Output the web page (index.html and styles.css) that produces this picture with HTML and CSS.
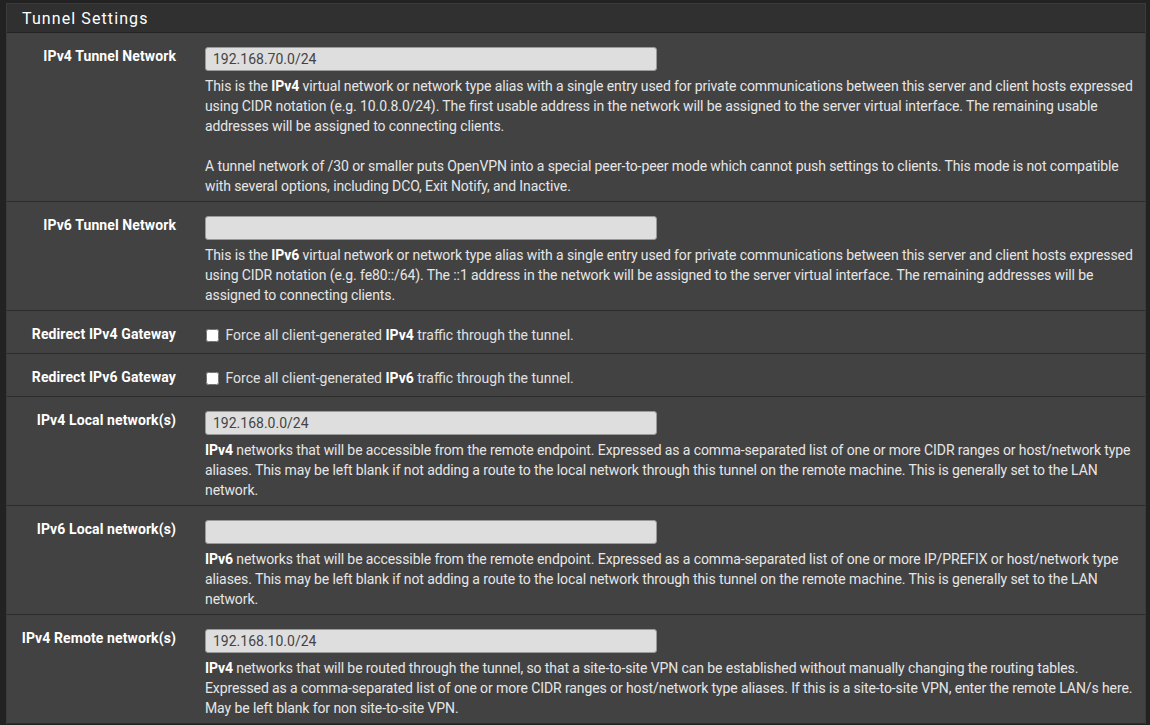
FILE: index.html
```html
<!DOCTYPE html>
<html lang="en">
<head>
    <meta charset="UTF-8">
    <title>Tunnel Settings</title>
    <link rel="stylesheet" href="styles.css">
</head>
<body>
<div class="panel">
    <div class="panel-heading">
        <h2 class="panel-title">Tunnel Settings</h2>
    </div>
    <div class="panel-body">
        <div class="form-group">
            <label class="col-label" for="tunnel_network">IPv4 Tunnel Network</label>
            <div class="col-field">
                <input type="text" id="tunnel_network" value="192.168.70.0/24">
                <span class="help-block">This is the <b>IPv4</b> virtual network or network type alias with a single entry used for private communications between this server and client hosts expressed using CIDR notation (e.g. 10.0.8.0/24). The first usable address in the network will be assigned to the server virtual interface. The remaining usable addresses will be assigned to connecting clients.<br><br>A tunnel network of /30 or smaller puts OpenVPN into a special peer-to-peer mode which cannot push settings to clients. This mode is not compatible with several options, including DCO, Exit Notify, and Inactive.</span>
            </div>
        </div>
        <div class="form-group">
            <label class="col-label" for="tunnel_networkv6">IPv6 Tunnel Network</label>
            <div class="col-field">
                <input type="text" id="tunnel_networkv6" value="">
                <span class="help-block">This is the <b>IPv6</b> virtual network or network type alias with a single entry used for private communications between this server and client hosts expressed using CIDR notation (e.g. fe80::/64). The ::1 address in the network will be assigned to the server virtual interface. The remaining addresses will be assigned to connecting clients.</span>
            </div>
        </div>
        <div class="form-group">
            <label class="col-label" for="gwredir">Redirect IPv4 Gateway</label>
            <div class="col-field">
                <label class="chkbox"><input type="checkbox" id="gwredir"> Force all client-generated <b>IPv4</b> traffic through the tunnel.</label>
            </div>
        </div>
        <div class="form-group">
            <label class="col-label" for="gwredir6">Redirect IPv6 Gateway</label>
            <div class="col-field">
                <label class="chkbox"><input type="checkbox" id="gwredir6"> Force all client-generated <b>IPv6</b> traffic through the tunnel.</label>
            </div>
        </div>
        <div class="form-group">
            <label class="col-label" for="local_network">IPv4 Local network(s)</label>
            <div class="col-field">
                <input type="text" id="local_network" value="192.168.0.0/24">
                <span class="help-block"><b>IPv4</b> networks that will be accessible from the remote endpoint. Expressed as a comma-separated list of one or more CIDR ranges or host/network type aliases. This may be left blank if not adding a route to the local network through this tunnel on the remote machine. This is generally set to the LAN network.</span>
            </div>
        </div>
        <div class="form-group">
            <label class="col-label" for="local_networkv6">IPv6 Local network(s)</label>
            <div class="col-field">
                <input type="text" id="local_networkv6" value="">
                <span class="help-block"><b>IPv6</b> networks that will be accessible from the remote endpoint. Expressed as a comma-separated list of one or more IP/PREFIX or host/network type aliases. This may be left blank if not adding a route to the local network through this tunnel on the remote machine. This is generally set to the LAN network.</span>
            </div>
        </div>
        <div class="form-group">
            <label class="col-label" for="remote_network">IPv4 Remote network(s)</label>
            <div class="col-field">
                <input type="text" id="remote_network" value="192.168.10.0/24">
                <span class="help-block"><b>IPv4</b> networks that will be routed through the tunnel, so that a site-to-site VPN can be established without manually changing the routing tables. Expressed as a comma-separated list of one or more CIDR ranges or host/network type aliases. If this is a site-to-site VPN, enter the remote LAN/s here. May be left blank for non site-to-site VPN.</span>
            </div>
        </div>
    </div>
</div>
</body>
</html>
```

FILE: styles.css
```css
body {
    font-family: Roboto, "Liberation Sans", sans-serif;
    font-size: 14px;
    background-color: #222;
    color: #e0e0e0;
    margin: 0;
    padding: 3px 4px 0 6px;
}

.panel {
    border: 1px solid #3b3b3b;
    border-bottom: none;
    background-color: #424242;
}

.panel-heading {
    background-color: #303030;
    border-bottom: 1px solid #232323;
    padding: 7px 15px 5px 15px;
}

.panel-title {
    margin: 0;
    font-size: 16px;
    font-weight: normal;
    letter-spacing: 1.1px;
    line-height: 16px;
    color: #fff;
}

.form-group {
    display: grid;
    grid-template-columns: 169px 1fr;
    column-gap: 29px;
    padding: 14px 9px 5px 0;
    border-bottom: 1px solid #2c2c2c;
}

.col-label {
    text-align: right;
    font-weight: bold;
    letter-spacing: 0.1px;
    color: #fff;
    line-height: 18px;
}

.col-field input[type="text"] {
    display: block;
    width: 452px;
    height: 24px;
    box-sizing: border-box;
    padding: 2px 7px;
    font-family: Roboto, "Liberation Sans", sans-serif;
    font-size: 14px;
    color: #444;
    background-color: #dedede;
    border: 1px solid #9a9a9a;
    border-radius: 3px;
}

.help-block {
    display: block;
    margin-top: 5px;
    line-height: 20px;
    letter-spacing: -0.1px;
    color: #e6e6e6;
}

.help-block b,
.chkbox b {
    color: #fff;
}

.chkbox {
    display: block;
    line-height: 20px;
    padding-bottom: 3px;
}

.chkbox input {
    width: 13px;
    height: 13px;
    margin: 0 3px 0 1px;
    vertical-align: -2px;
}
```
